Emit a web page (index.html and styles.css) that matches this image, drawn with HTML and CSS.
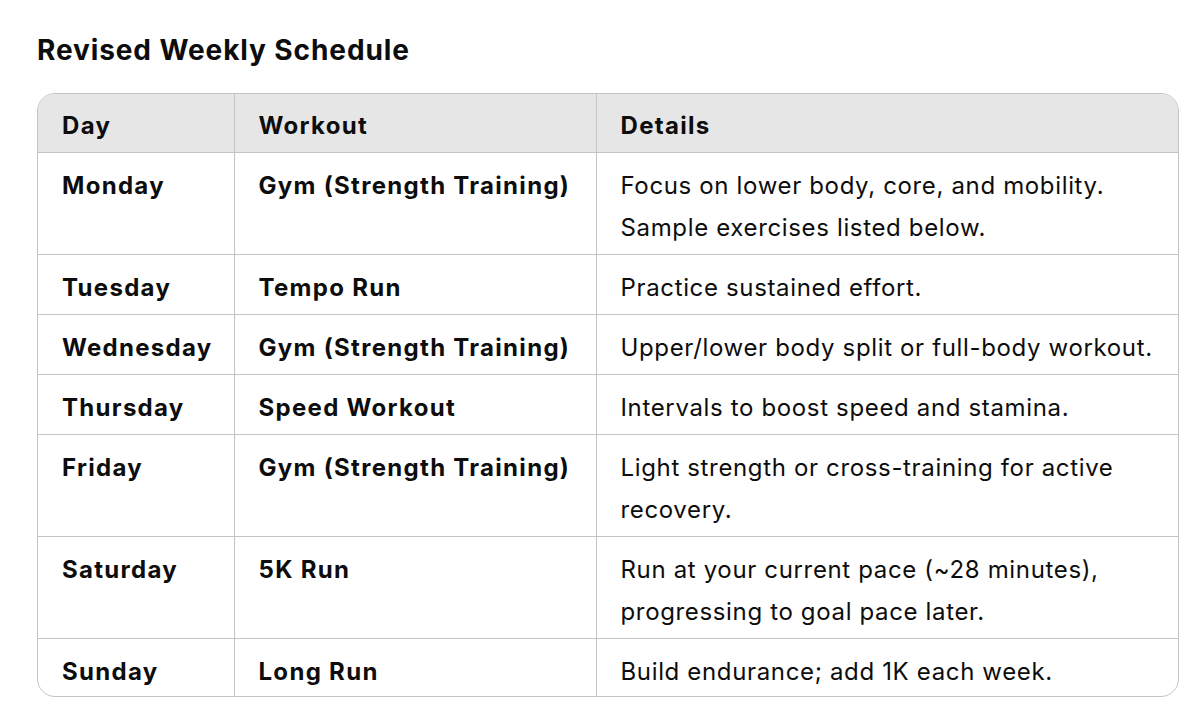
FILE: index.html
```html
<!DOCTYPE html>
<html>
<head>
<meta charset="utf-8">
<link rel="stylesheet" href="styles.css">
</head>
<body>
<div class="page">
  <h3 class="title">Revised Weekly Schedule</h3>
  <div class="table-wrap">
    <table class="schedule">
      <colgroup>
        <col class="c1"><col class="c2"><col class="c3">
      </colgroup>
      <thead>
        <tr><th>Day</th><th>Workout</th><th>Details</th></tr>
      </thead>
      <tbody>
        <tr><td><strong>Monday</strong></td><td><strong>Gym (Strength Training)</strong></td><td>Focus on lower body, core, and mobility. Sample exercises listed below.</td></tr>
        <tr><td><strong>Tuesday</strong></td><td><strong>Tempo Run</strong></td><td>Practice sustained effort.</td></tr>
        <tr><td><strong>Wednesday</strong></td><td><strong>Gym (Strength Training)</strong></td><td>Upper/lower body split or full-body workout.</td></tr>
        <tr><td><strong>Thursday</strong></td><td><strong>Speed Workout</strong></td><td>Intervals to boost speed and stamina.</td></tr>
        <tr><td><strong>Friday</strong></td><td><strong>Gym (Strength Training)</strong></td><td>Light strength or cross-training for active recovery.</td></tr>
        <tr><td><strong>Saturday</strong></td><td><strong>5K Run</strong></td><td>Run at your current pace (~28 minutes), progressing to goal pace later.</td></tr>
        <tr><td><strong>Sunday</strong></td><td><strong>Long Run</strong></td><td>Build endurance; add 1K each week.</td></tr>
      </tbody>
    </table>
  </div>
</div>
</body>
</html>
```

FILE: styles.css
```css
html, body {
  margin: 0;
  padding: 0;
  background: #ffffff;
}
body {
  font-family: Inter, "Noto Sans", "Liberation Sans", sans-serif;
  color: #0d0d0d;
}
.page {
  padding: 30px 23px 0 37px;
}
.title {
  margin: 0 0 23px 0;
  font-size: 28px;
  line-height: 40px;
  font-weight: 700;
  letter-spacing: 0.9px;
}
.table-wrap {
  box-sizing: border-box;
  width: 1142px;
  border: 1px solid #c4c4c4;
  border-radius: 18px;
  overflow: hidden;
}
.schedule {
  width: 100%;
  border-collapse: collapse;
  table-layout: fixed;
  font-size: 24px;
  line-height: 42px;
  letter-spacing: 0.65px;
}
.c1 { width: 196px; }
.c2 { width: 362px; }
.schedule th, .schedule td {
  text-align: left;
  vertical-align: top;
  padding: 12px 15px 5px 24px;
  border-right: 1px solid #c4c4c4;
  border-bottom: 1px solid #c4c4c4;
}
.schedule th {
  padding-top: 11px;
  background: #e6e6e6;
  font-weight: 700;
  letter-spacing: 1.3px;
}
.schedule th:last-child, .schedule td:last-child {
  border-right: none;
}
.schedule tbody tr:last-child td {
  border-bottom: none;
  padding-bottom: 3px;
}
.schedule strong {
  font-weight: 700;
  letter-spacing: 1.3px;
}
```
